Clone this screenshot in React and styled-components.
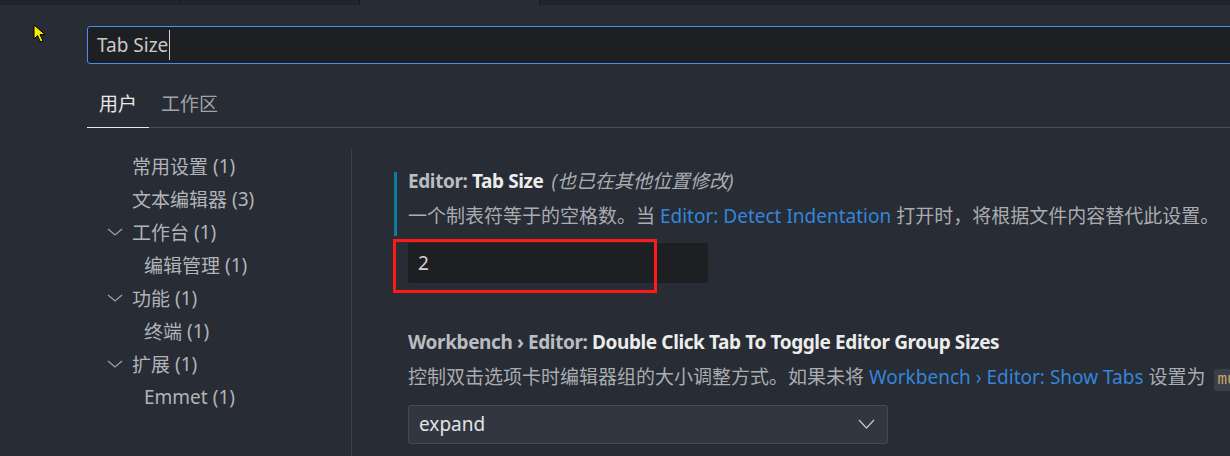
import styled, { createGlobalStyle } from "styled-components";

const GlobalStyle = createGlobalStyle`
  html, body {
    margin: 0;
    padding: 0;
    background: #282c34;
    overflow: hidden;
  }
  body {
    font-family: "Noto Sans", "Noto Sans CJK SC", sans-serif;
    font-size: 19px;
    color: #b1b4b9;
  }
`;

const Window = styled.div`
  position: relative;
  height: 456px;
  display: flex;
  flex-direction: column;
  overflow: hidden;
`;

const TabStrip = styled.div`
  display: flex;
  height: 5px;
  background: #21252b;
  flex-shrink: 0;
`;

const StripTab = styled.div`
  width: 180px;
  background: ${(p) => (p.active ? "#282c34" : "#21252b")};
  border-right: 1px solid #181a1f;
  box-sizing: border-box;
`;

const Cursor = styled.svg`
  position: absolute;
  left: 33px;
  top: 24px;
`;

const Editor = styled.div`
  flex: 1;
  display: flex;
  flex-direction: column;
  padding: 21px 0 0 87px;
  min-height: 0;
`;

const SearchBox = styled.div`
  display: flex;
  align-items: center;
  height: 38px;
  margin-right: -20px;
  padding-left: 9px;
  background: #1d1f23;
  border: 1px solid #4d8cf5;
  border-radius: 3px;
  box-sizing: border-box;
  color: #c9c9c9;
  flex-shrink: 0;
`;

const Caret = styled.span`
  width: 1px;
  height: 30px;
  background: #d0d0d0;
  margin-left: 1px;
`;

const ScopeTabs = styled.div`
  display: flex;
  margin-top: 24px;
  border-bottom: 1px solid #4a4e56;
  flex-shrink: 0;
`;

const ScopeTab = styled.div`
  padding: 0 12px 6px;
  line-height: 33px;
  margin-bottom: -1px;
  color: ${(p) => (p.active ? "#e8e8e8" : "#a0a4aa")};
  border-bottom: 1px solid ${(p) => (p.active ? "#e8e8e8" : "transparent")};
`;

const Body = styled.div`
  flex: 1;
  display: flex;
  margin-top: 21px;
  min-height: 0;
`;

const Tree = styled.div`
  width: 264px;
  flex-shrink: 0;
  border-right: 1px solid #3c414b;
`;

const TreeRow = styled.div`
  display: flex;
  align-items: center;
  height: 33px;
  padding-left: ${(p) => 20 + p.depth * 12}px;
  white-space: nowrap;
  color: #b1b4b9;
`;

const Twistie = styled.span`
  display: inline-flex;
  justify-content: center;
  width: 16px;
  margin-right: 9px;
`;

const Count = styled.span`
  margin-left: 5px;
`;

const Settings = styled.div`
  flex: 1;
  min-width: 0;
  padding: 19px 0 0 42px;
  white-space: nowrap;
  overflow: hidden;
`;

const SettingItem = styled.div`
  position: relative;
  padding-left: 14px;
  margin-bottom: ${(p) => p.gap || 0}px;

  &::before {
    content: "";
    display: ${(p) => (p.modified ? "block" : "none")};
    position: absolute;
    left: 0;
    top: 4px;
    width: 3px;
    height: 64px;
    background: #0c7d9d;
  }
`;

const Title = styled.div`
  line-height: 26px;
  font-weight: 700;
  letter-spacing: -0.4px;
`;

const Category = styled.span`
  color: #b9bcc0;
`;

const Label = styled.span`
  color: #ececec;
`;

const Note = styled.span`
  font-weight: 400;
  font-style: italic;
  letter-spacing: 0;
  color: #a9acb1;
  margin-left: 8px;
`;

const Desc = styled.div`
  margin-top: 9px;
  line-height: 26px;
  color: #a9acb1;
`;

const Link = styled.span`
  color: #3485db;
`;

const Code = styled.span`
  display: inline-block;
  margin-left: 8px;
  padding: 0 4px;
  line-height: 22px;
  background: #3a3f48;
  border-radius: 3px;
  color: #c9a66b;
  font-family: "Liberation Mono", monospace;
  font-size: 16px;
`;

const NumberInput = styled.div`
  margin-top: 14px;
  width: 300px;
  height: 40px;
  padding-left: 10px;
  box-sizing: border-box;
  display: flex;
  align-items: center;
  background: #1d1f23;
  border-radius: 2px;
  color: #d4d4d4;
`;

const Select = styled.div`
  margin-top: 14px;
  width: 480px;
  height: 39px;
  padding: 0 12px 2px 10px;
  box-sizing: border-box;
  display: flex;
  align-items: center;
  justify-content: space-between;
  background: #313640;
  border: 1px solid #454a54;
  border-radius: 3px;
  color: #e4e4e4;
`;

const Highlight = styled.div`
  position: absolute;
  left: -1px;
  top: 71px;
  width: 264px;
  height: 54px;
  box-sizing: border-box;
  border: 3px solid #ff1a1a;
`;

const Chevron = ({ w = 16, h = 8, color = "#9ea2a8" }) => (
  <svg width={w} height={h} viewBox={`0 0 ${w} ${h}`}>
    <polyline
      points={`1,1 ${w / 2},${h - 1} ${w - 1},1`}
      fill="none"
      stroke={color}
      strokeWidth="1.2"
    />
  </svg>
);

const tree = [
  { label: "常用设置", count: 1, depth: 0 },
  { label: "文本编辑器", count: 3, depth: 0 },
  { label: "工作台", count: 1, depth: 0, open: true },
  { label: "编辑管理", count: 1, depth: 1 },
  { label: "功能", count: 1, depth: 0, open: true },
  { label: "终端", count: 1, depth: 1 },
  { label: "扩展", count: 1, depth: 0, open: true },
  { label: "Emmet", count: 1, depth: 1 },
];

export default function App() {
  return (
    <Window>
      <GlobalStyle />
      <TabStrip>
        <StripTab />
        <StripTab />
        <StripTab active />
      </TabStrip>
      <Cursor width="16" height="20" viewBox="0 0 16 20">
        <polygon
          points="1,1 1,15 4.5,11.5 7.5,18 10,17 7,10.5 12,10.5"
          fill="#f5ef00"
          stroke="#000"
          strokeWidth="1"
        />
      </Cursor>
      <Editor>
        <SearchBox>
          Tab Size
          <Caret />
        </SearchBox>
        <ScopeTabs>
          <ScopeTab active>用户</ScopeTab>
          <ScopeTab>工作区</ScopeTab>
        </ScopeTabs>
        <Body>
          <Tree>
            {tree.map((t) => (
              <TreeRow key={t.label} depth={t.depth}>
                <Twistie>{t.open && <Chevron />}</Twistie>
                {t.label}
                <Count>({t.count})</Count>
              </TreeRow>
            ))}
          </Tree>
          <Settings>
            <SettingItem modified gap={46}>
              <Title>
                <Category>Editor: </Category>
                <Label>Tab Size</Label>
                <Note>(也已在其他位置修改)</Note>
              </Title>
              <Desc>
                一个制表符等于的空格数。当 <Link>Editor: Detect Indentation</Link>{" "}
                打开时，将根据文件内容替代此设置。
              </Desc>
              <NumberInput>2</NumberInput>
              <Highlight />
            </SettingItem>
            <SettingItem>
              <Title>
                <Category>Workbench › Editor: </Category>
                <Label>Double Click Tab To Toggle Editor Group Sizes</Label>
              </Title>
              <Desc>
                控制双击选项卡时编辑器组的大小调整方式。如果未将{" "}
                <Link>Workbench › Editor: Show Tabs</Link> 设置为
                <Code>multiple</Code>
              </Desc>
              <Select>
                expand
                <Chevron w={17} h={10} color="#c4c7cc" />
              </Select>
            </SettingItem>
          </Settings>
        </Body>
      </Editor>
    </Window>
  );
}
